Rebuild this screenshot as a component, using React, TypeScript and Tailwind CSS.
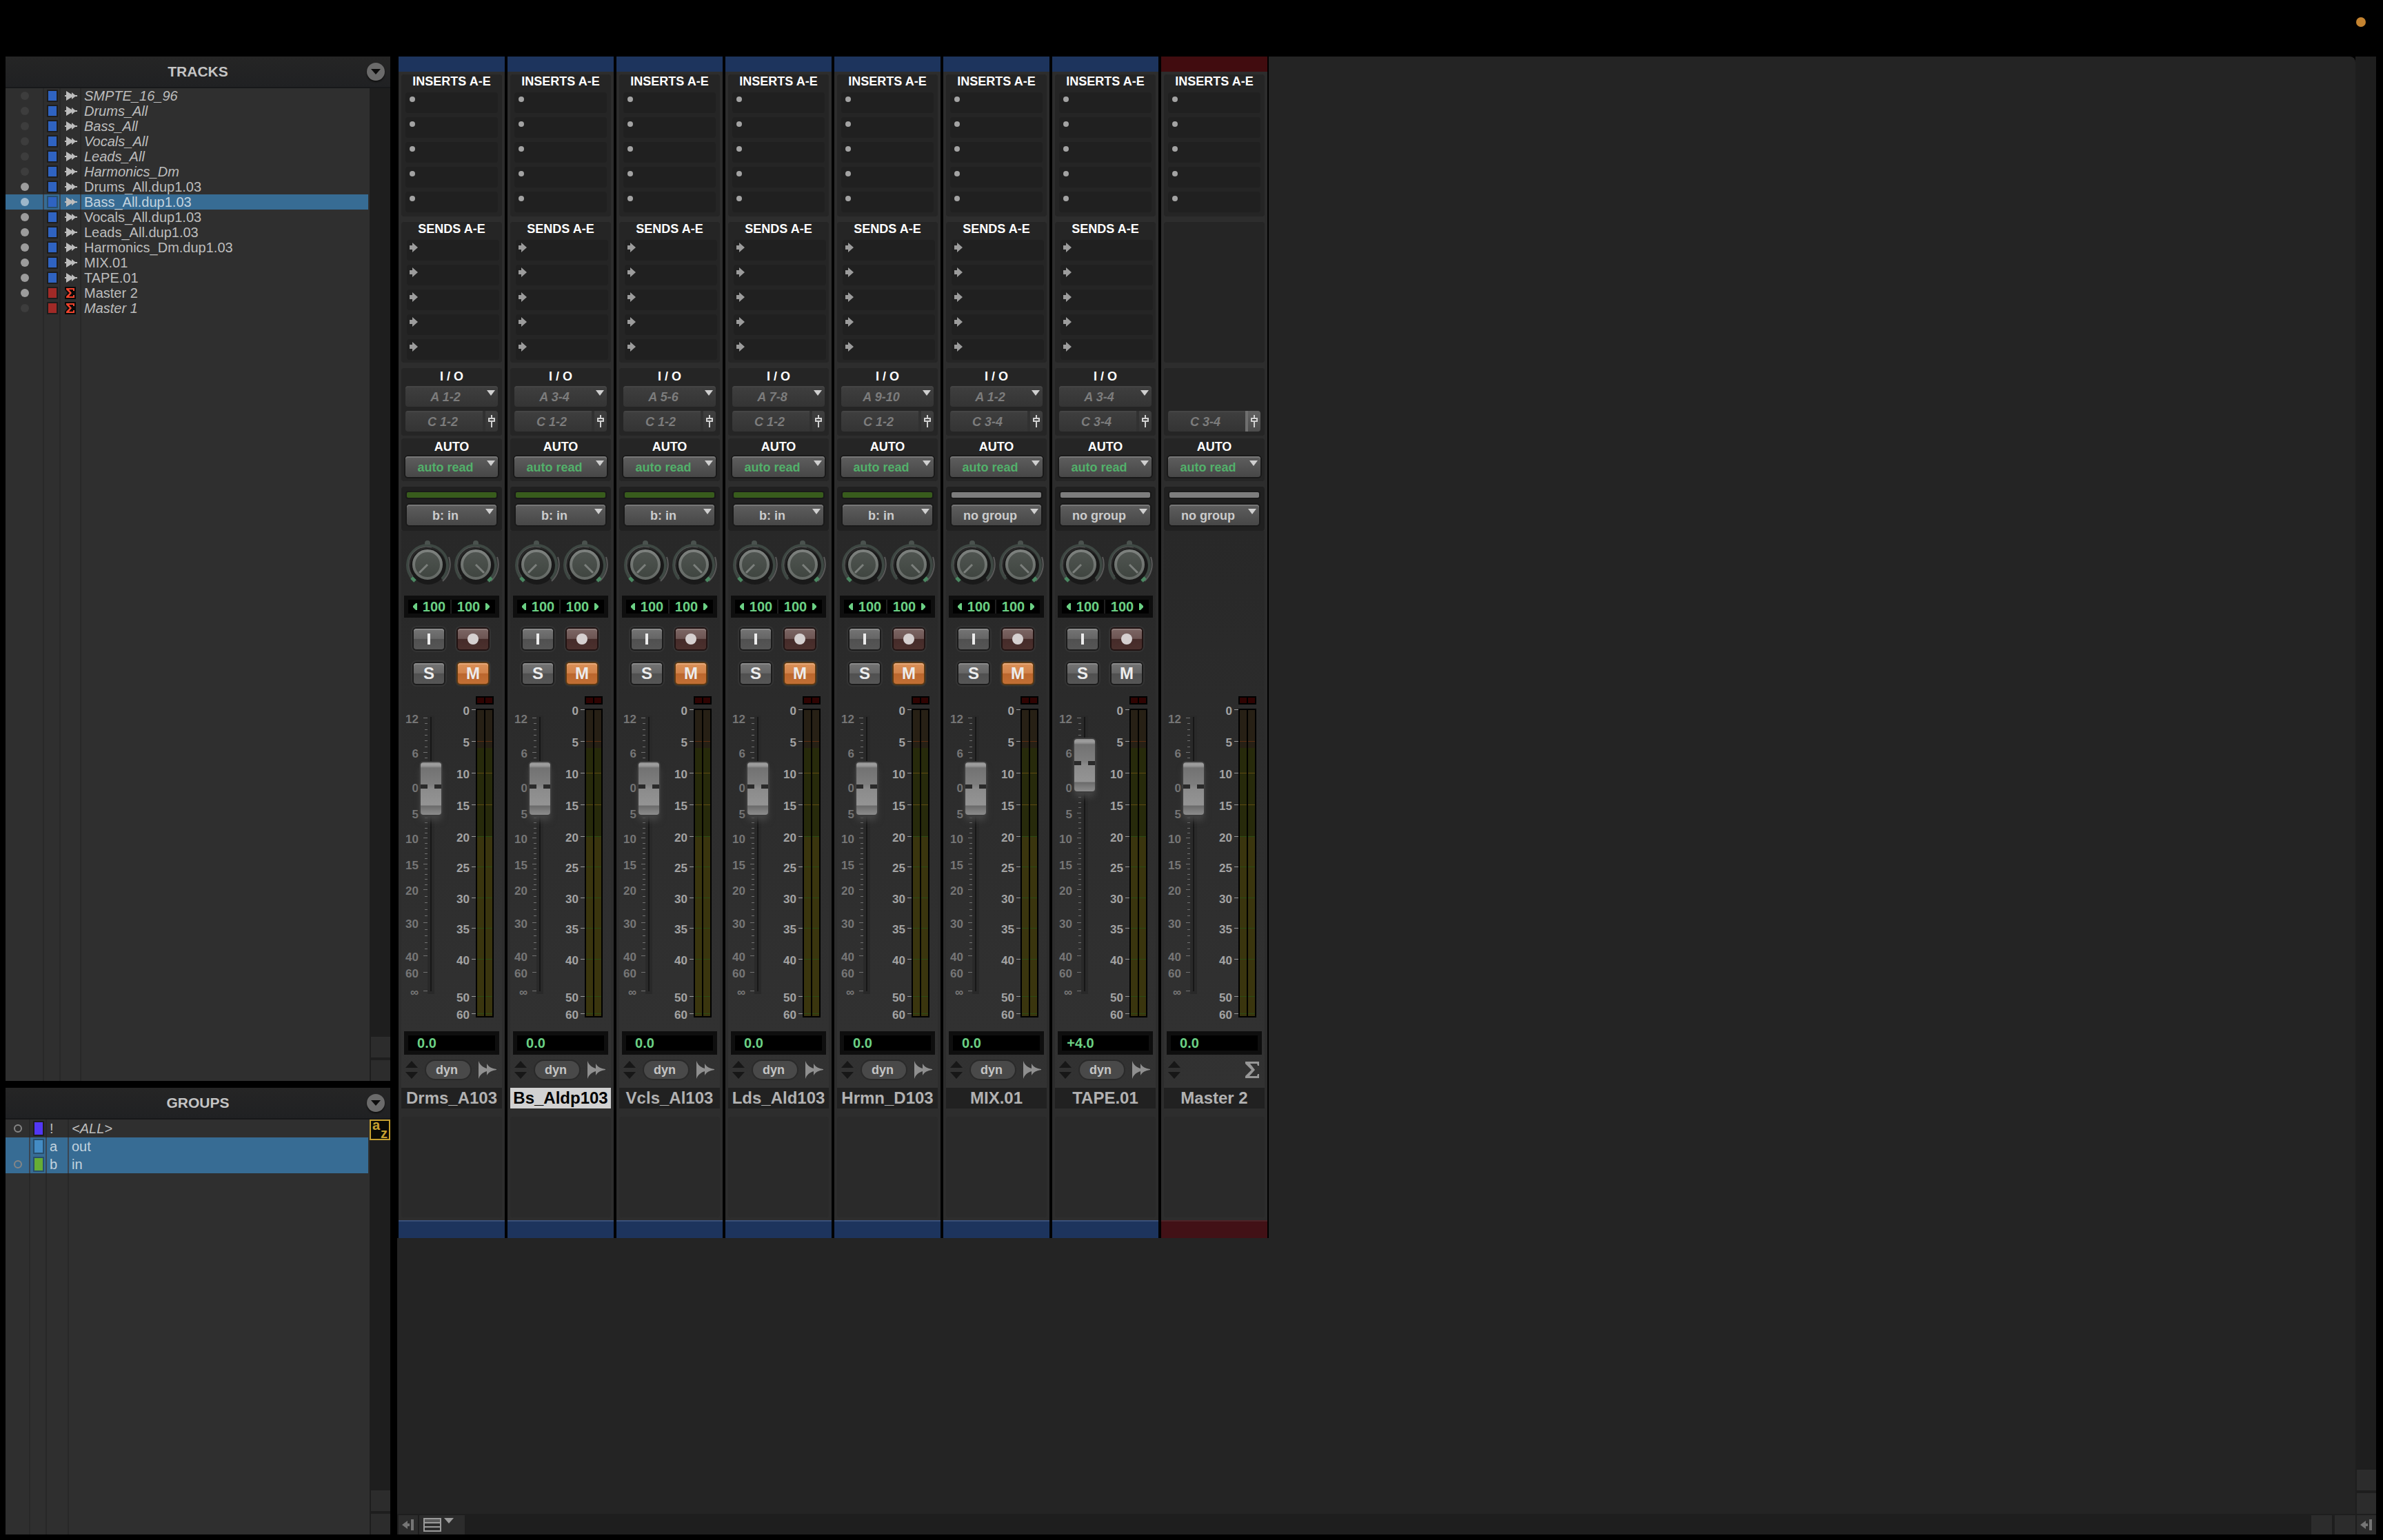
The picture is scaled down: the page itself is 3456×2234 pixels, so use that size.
import React from 'react';
import clsx from 'clsx';

type TrackKind = 'audio' | 'master';

interface TrackRow {
  name: string;
  kind: TrackKind;
  visible: boolean;
  selected?: boolean;
}

interface Strip {
  name: string;
  kind: TrackKind;
  input?: string;
  output: string;
  group: string;
  muted?: boolean;
  selected?: boolean;
  volume: string;
  fader: number;
}

const TRACKS: TrackRow[] = [
  { name: 'SMPTE_16_96', kind: 'audio', visible: false },
  { name: 'Drums_All', kind: 'audio', visible: false },
  { name: 'Bass_All', kind: 'audio', visible: false },
  { name: 'Vocals_All', kind: 'audio', visible: false },
  { name: 'Leads_All', kind: 'audio', visible: false },
  { name: 'Harmonics_Dm', kind: 'audio', visible: false },
  { name: 'Drums_All.dup1.03', kind: 'audio', visible: true },
  { name: 'Bass_All.dup1.03', kind: 'audio', visible: true, selected: true },
  { name: 'Vocals_All.dup1.03', kind: 'audio', visible: true },
  { name: 'Leads_All.dup1.03', kind: 'audio', visible: true },
  { name: 'Harmonics_Dm.dup1.03', kind: 'audio', visible: true },
  { name: 'MIX.01', kind: 'audio', visible: true },
  { name: 'TAPE.01', kind: 'audio', visible: true },
  { name: 'Master 2', kind: 'master', visible: true },
  { name: 'Master 1', kind: 'master', visible: false },
];

const GROUPS = [
  { id: '!', name: '<ALL>', color: 'bg-[#5237f5]', ring: true, selected: false },
  { id: 'a', name: 'out', color: 'bg-[#448cc4]', ring: false, selected: true },
  { id: 'b', name: 'in', color: 'bg-[#66ad35]', ring: true, selected: true },
];

const STRIPS: Strip[] = [
  { name: 'Drms_A103', kind: 'audio', input: 'A 1-2', output: 'C 1-2', group: 'b: in', muted: true, volume: '0.0', fader: 294 },
  { name: 'Bs_Aldp103', kind: 'audio', input: 'A 3-4', output: 'C 1-2', group: 'b: in', muted: true, selected: true, volume: '0.0', fader: 294 },
  { name: 'Vcls_Al103', kind: 'audio', input: 'A 5-6', output: 'C 1-2', group: 'b: in', muted: true, volume: '0.0', fader: 294 },
  { name: 'Lds_Ald103', kind: 'audio', input: 'A 7-8', output: 'C 1-2', group: 'b: in', muted: true, volume: '0.0', fader: 294 },
  { name: 'Hrmn_D103', kind: 'audio', input: 'A 9-10', output: 'C 1-2', group: 'b: in', muted: true, volume: '0.0', fader: 294 },
  { name: 'MIX.01', kind: 'audio', input: 'A 1-2', output: 'C 3-4', group: 'no group', muted: true, volume: '0.0', fader: 294 },
  { name: 'TAPE.01', kind: 'audio', input: 'A 3-4', output: 'C 3-4', group: 'no group', volume: '+4.0', fader: 328 },
  { name: 'Master 2', kind: 'master', output: 'C 3-4', group: 'no group', volume: '0.0', fader: 294 },
];

// label + y position inside the fader area
const FADER_SCALE: [string, number][] = [
  ['12', 39], ['6', 89], ['0', 139], ['5', 177], ['10', 213], ['15', 251],
  ['20', 288], ['30', 336], ['40', 384], ['60', 408], ['∞', 435],
];
const METER_SCALE: [string, number][] = [
  ['0', 27], ['5', 73], ['10', 119], ['15', 165], ['20', 211], ['25', 255],
  ['30', 300], ['35', 344], ['40', 389], ['50', 443], ['60', 468],
];
// number of minor ticks between each pair of fader marks
const MINOR = [5, 5, 4, 4, 4, 4, 4, 4, 0, 0];

const meterLine = (label: string) => {
  if (label === '0') return 'none';
  if (label === '5') return '#5c2e12';
  if (label === '10' || label === '15') return '#5e4a12';
  return '#2b4c14';
};

const FastIcon = () => (
  <svg width="18" height="14" viewBox="0 0 18 14" fill="#bdbdbd">
    <path d="M0 6h2V0l8 5V2l5 4h3v2h-3l-5 4V9l-8 5V8H0z" />
  </svg>
);

const SigmaIcon = () => (
  <svg width="16" height="18" viewBox="0 0 16 18">
    <path d="M0 0h16v18H0v-4l4-5-4-5z" fill="#0a0a0a" />
    <path d="M2 2h12v4h-2V4H6l4 5-4 5h6v-2h2v4H2v-2l5-5-5-5z" fill="#f0432c" />
  </svg>
);

const WaveIcon = () => (
  <svg width="26" height="26" viewBox="0 0 26 26" fill="#8f8f8f">
    <path d="M0 0c2 6 6 9 12 11V4c3 5 7 7 14 8v1c-7 1-11 3-14 8v-6C6 17 2 20 0 26z" />
  </svg>
);

const BigSigmaIcon = () => (
  <svg width="20" height="24" viewBox="0 0 20 24" fill="#979797">
    <path d="M0 0h20v6h-2l-1-3H7l7 9-8 9h11l1-3h2v6H0v-3l9-9-9-9z" />
  </svg>
);

const EdgeArrow = () => (
  <svg width="18" height="16" viewBox="0 0 18 16" fill="#757575">
    <path d="M0 8l8-6v4h3v4H8v4zM13 0h4v16h-4z" />
  </svg>
);

const Caret = ({ className }: { className: string }) => (
  <svg className={className} width="12" height="8" viewBox="0 0 12 8" fill="#cfcfcf">
    <path d="M0 0h12L6 8z" />
  </svg>
);

const PanelHeader = ({ title }: { title: string }) => (
  <header className="flex h-[46px] shrink-0 items-center border-b-2 border-[#17181a] bg-gradient-to-b from-[#252525] to-[#202123]">
    <h2 className="flex-1 pl-[34px] text-center text-[21px] font-bold text-[#c4c4c4]">{title}</h2>
    <button aria-label={`${title} menu`} className="mr-2 flex h-[26px] w-[26px] items-center justify-center rounded-full bg-[#6b6b6b] shadow-[0_2px_2px_#101010]">
      <svg width="14" height="8" viewBox="0 0 14 8"><path d="M0 0h14L7 8z" fill="#0c0c0c" /></svg>
    </button>
  </header>
);

const ListScrollbar = ({ children }: { children?: React.ReactNode }) => (
  <div className="flex w-[30px] shrink-0 flex-col bg-[#1e1e1e]">
    {children}
    <div className="mt-auto ml-0.5 flex flex-col gap-1">
      <div className="h-[30px] bg-[#2c2c2c]" />
      <div className="h-[30px] bg-[#2c2c2c]" />
    </div>
  </div>
);

const Swatch = ({ color, selected, tall }: { color: string; selected?: boolean; tall?: boolean }) => (
  <span
    className={clsx('block w-4 border-2', color, tall ? 'h-[22px]' : 'h-[18px]', selected ? 'border-[#284f6d]' : 'border-[#1d1d1d]')}
  />
);

const TracksPanel = () => (
  <section className="flex min-h-0 flex-1 flex-col">
    <PanelHeader title="TRACKS" />
    <div className="flex min-h-0 flex-1">
      <ul className="flex flex-1 flex-col bg-[#2f2f2f] pr-0.5">
        {TRACKS.map((t) => {
          const rule = t.selected ? 'border-r-2 border-[#3a4552]' : 'border-r-2 border-[#282828]';
          return (
            <li
              key={t.name}
              className={clsx('grid h-[22px] shrink-0 grid-cols-[56px_24px_30px_1fr]', t.selected ? 'bg-[#376c94]' : '')}
            >
              <span className={clsx('flex items-center justify-center pl-0.5', rule)}>
                <span className={clsx('h-3 w-3 rounded-full', t.selected ? 'bg-[#9db7cb]' : t.visible ? 'bg-[#9c9c9c]' : 'bg-[#3d3d3d]')} />
              </span>
              <span className={clsx('flex items-center pl-1', rule)}>
                <Swatch color={t.kind === 'audio' ? 'bg-[#2f63c1]' : 'bg-[#a12a27]'} selected={t.selected} />
              </span>
              <span className={clsx('flex items-center pl-1.5', rule)}>{t.kind === 'audio' ? <FastIcon /> : <SigmaIcon />}</span>
              <button
                className={clsx('pl-1 text-left text-[20px] leading-[22px]', !t.visible && 'italic', t.selected ? 'text-[#c3d3df]' : 'text-[#bdbdbd]')}
              >
                {t.name}
              </button>
            </li>
          );
        })}
        <li aria-hidden="true" className="grid flex-1 grid-cols-[56px_24px_30px_1fr]">
          <span className="border-r-2 border-[#282828]" />
          <span className="border-r-2 border-[#282828]" />
          <span className="border-r-2 border-[#282828]" />
        </li>
      </ul>
      <ListScrollbar />
    </div>
  </section>
);

const GroupsPanel = () => (
  <section className="flex h-[648px] shrink-0 flex-col">
    <PanelHeader title="GROUPS" />
    <div className="flex min-h-0 flex-1">
      <ul className="flex flex-1 flex-col bg-[#2f2f2f] pr-0.5">
        {GROUPS.map((g) => {
          const rule = g.selected ? 'border-r-2 border-[#3a4552]' : 'border-r-2 border-[#282828]';
          return (
            <li
              key={g.id}
              className={clsx(
                'grid h-[26px] shrink-0 grid-cols-[36px_24px_32px_1fr] text-[20px] leading-[26px]',
                g.selected ? 'bg-[#376c94] text-[#c3d3df]' : 'text-[#bdbdbd]'
              )}
            >
              <span className={clsx('flex items-center justify-center pl-0.5', rule)}>
                {g.ring && <span className="h-3 w-3 rounded-full border-2 border-[#868686]" />}
              </span>
              <span className={clsx('flex items-center pl-1', rule)}>
                <Swatch color={g.color} selected={g.selected} tall />
              </span>
              <span className={clsx('pl-1', rule)}>{g.id}</span>
              <button className={clsx('pl-1 text-left', !g.selected && 'italic')}>{g.name}</button>
            </li>
          );
        })}
        <li aria-hidden="true" className="grid flex-1 grid-cols-[36px_24px_32px_1fr]">
          <span className="border-r-2 border-[#282828]" />
          <span className="border-r-2 border-[#282828]" />
          <span className="border-r-2 border-[#282828]" />
        </li>
      </ul>
      <ListScrollbar>
        <button className="flex h-[30px] w-[30px] justify-between border-2 border-[#c6a030] bg-[#0b0a06] px-0.5 text-[20px] font-bold text-[#c6a030]">
          <span className="self-start leading-3">a</span>
          <span className="self-end leading-4">z</span>
        </button>
      </ListScrollbar>
    </div>
  </section>
);

const SectionTitle = ({ children, loose }: { children?: React.ReactNode; loose?: boolean }) => (
  <h3 className={clsx('h-[26px] text-center text-[18px] font-bold text-white', loose ? 'leading-6' : 'leading-5')}>{children}</h3>
);

const Slots = ({ label, sends }: { label: string; sends?: boolean }) => (
  <div className={clsx('flex flex-col gap-1.5', sends ? 'pr-1 pl-2' : 'px-1.5')}>
    {['a', 'b', 'c', 'd', 'e'].map((slot) => (
      <button
        key={slot}
        aria-label={`${label} ${slot}`}
        className={clsx('flex h-[30px] items-start rounded bg-[#202020]', sends ? 'pt-1 pl-1' : 'pt-1.5 pl-1.5')}
      >
        {sends ? (
          <svg width="12" height="14" viewBox="0 0 12 14" fill="#9c9c9c"><path d="M0 4h4V0l8 7-8 7v-4H0z" /></svg>
        ) : (
          <span className="h-2 w-2 rounded-full bg-[#a3a3a3]" />
        )}
      </button>
    ))}
  </div>
);

const DropDown = ({ label, value, tone }: { label: string; value: string; tone: 'dim' | 'auto' | 'group' }) => (
  <div className="relative">
    <select
      aria-label={label}
      defaultValue={value}
      className={clsx(
        'block h-[30px] w-full appearance-none rounded pt-0.5 pr-[18px] text-[18px] font-bold [text-align-last:center]',
        tone === 'dim' && 'bg-gradient-to-b from-[#3f3f3f] to-[#343434] text-[#7c7c7c] italic shadow-[inset_0_2px_0_#454545]',
        tone !== 'dim' && 'bg-gradient-to-b from-[#5e5e5e] to-[#474747] shadow-[inset_0_2px_0_#777777,0_0_0_2px_#191919]',
        tone === 'auto' && 'text-[#52b06a]',
        tone === 'group' && 'text-[#cbcbcb]'
      )}
    >
      <option>{value}</option>
    </select>
    <Caret className="pointer-events-none absolute top-1.5 right-1" />
  </div>
);

const OutputPath = ({ value, master }: { value: string; master?: boolean }) => (
  <div className="flex h-[30px] overflow-hidden rounded">
    <button className="flex-1 bg-gradient-to-b from-[#3f3f3f] to-[#343434] pt-0.5 pr-1 text-[18px] font-bold text-[#7c7c7c] italic shadow-[inset_0_2px_0_#454545]">
      {value}
    </button>
    <button
      aria-label="Output window"
      className={clsx(
        'flex w-[22px] items-center justify-center border-l-4 bg-gradient-to-b',
        master ? 'border-[#6f6f6f] from-[#626262] to-[#4c4c4c]' : 'border-[#313131] from-[#3f3f3f] to-[#343434]'
      )}
    >
      <svg width="10" height="18" viewBox="0 0 10 18">
        <path d="M4 0h2v18H4z" fill="#d0d0d0" />
        <path d="M1 5h8v4H1z" fill="#444" stroke="#d0d0d0" strokeWidth="2" />
      </svg>
    </button>
  </div>
);

const Knob = ({ side }: { side: 'left' | 'right' }) => {
  const dir = side === 'left' ? -1 : 1;
  return (
    <label className="block">
      <input type="range" min={-100} max={100} defaultValue={dir * 100} aria-label={`Pan ${side}`} className="sr-only" />
      <svg width="70" height="68" viewBox="-35 -37 70 68" fill="none">
        <defs>
          <linearGradient id={`knob-${side}`} x1="0" y1="0" x2="0" y2="1">
            <stop offset="0" stopColor="#505551" />
            <stop offset="1" stopColor="#3f4540" />
          </linearGradient>
          <linearGradient id={`rim-${side}`} x1="0" y1="0" x2="0" y2="1">
            <stop offset="0" stopColor="#7d817e" />
            <stop offset="1" stopColor="#646965" />
          </linearGradient>
        </defs>
        <circle cx="1" cy="3" r="26" fill="#151515" opacity="0.8" />
        <path d="M-21 21A29 29 0 1 1 21 21" stroke="#3e4843" strokeWidth="4" />
        <path d="M-21 17A26 26 0 0 1 6 -25" stroke="#565656" strokeWidth="1" />
        <path d="M31 -11A33 33 0 0 1 22 24" stroke="#595959" strokeWidth="2" />
        <path d="M-4 -29v-2a4 4 0 0 1 8 0v2z" fill="#4a524e" />
        <path d={side === 'left' ? 'M-23 19l5 5' : 'M23 19l-5 5'} stroke="#4b8862" strokeWidth="5" />
        <circle r="20" fill={`url(#knob-${side})`} stroke={`url(#rim-${side})`} strokeWidth="4" />
        <path d={side === 'left' ? 'M0 0L-12 12' : 'M0 0L12 12'} stroke="#7b7f7c" strokeWidth="3" />
      </svg>
    </label>
  );
};

const GREY_BTN =
  'bg-[linear-gradient(#747474,#666666_48%,#505050_50%,#565656)] shadow-[inset_0_2px_0_#8a8a8a,0_0_0_2px_#1c1c1c,0_0_0_4px_#333333]';
const REC_BTN =
  'bg-[linear-gradient(#7c6664,#6d5553_48%,#452b29_50%,#4b302d)] shadow-[inset_0_2px_0_#8d7a78,0_0_0_2px_#211312,0_0_0_4px_#333333]';
const MUTE_BTN =
  'bg-[linear-gradient(#db9158,#d1834b_48%,#bb662d_50%,#c26f34)] shadow-[inset_0_2px_0_#e6a878,0_0_0_2px_#5c3a14,0_0_0_4px_#333333]';

const ChannelButtons = ({ muted }: { muted?: boolean }) => (
  <div className="mt-4 grid grid-cols-[44px_44px] justify-center gap-x-5 gap-y-5 pr-0.5 text-[24px] leading-[30px] font-bold text-[#ececec]">
    <button aria-label="Input monitor" className={clsx('flex h-[30px] items-center justify-center rounded-sm', GREY_BTN)}>
      <span className="h-4 w-1 bg-[#ececec]" />
    </button>
    <button aria-label="Record enable" className={clsx('flex h-[30px] items-center justify-center rounded-sm', REC_BTN)}>
      <span className="h-4 w-4 rounded-full bg-[#d6d0d0]" />
    </button>
    <button aria-label="Solo" className={clsx('h-[30px] rounded-sm', GREY_BTN)}>S</button>
    <button aria-label="Mute" className={clsx('h-[30px] rounded-sm', muted ? MUTE_BTN : GREY_BTN)}>M</button>
  </div>
);

const FaderAndMeter = ({ value, name }: { value: number; name: string }) => (
  <div className="relative h-[474px]">
    <svg
      width="146"
      height="474"
      viewBox="0 0 146 474"
      className="block overflow-visible font-['Liberation_Sans_Narrow','Liberation_Sans',sans-serif] text-[17px] font-bold"
      shapeRendering="crispEdges"
    >
      <rect x="38" y="36" width="10" height="404" fill="#292929" />
      <rect x="42" y="38" width="2" height="398" fill="#171717" />
      {FADER_SCALE.map(([label, y], i) => (
        <g key={label}>
          <text x="25" y={y + 8} textAnchor="end" fill="#767676">{label}</text>
          <rect x="32" y={y} width="6" height="1" fill="#727272" />
          {i < MINOR.length &&
            Array.from({ length: MINOR[i] }, (_, n) => {
              const next = FADER_SCALE[i + 1][1];
              return <rect key={n} x="34" y={Math.round(y + ((next - y) * (n + 1)) / (MINOR[i] + 1))} width="4" height="1" fill="#727272" />;
            })}
        </g>
      ))}
      <rect x="108" y="8" width="26" height="12" fill="#000" />
      <rect x="110" y="10" width="10" height="8" fill="#2f0302" />
      <rect x="122" y="10" width="10" height="8" fill="#2f0302" />
      <rect x="108" y="26" width="26" height="448" fill="#000" />
      {[110, 122].map((x) => (
        <g key={x}>
          <rect x={x} y="28" width="10" height="55" fill="#272015" />
          <rect x={x} y="83" width="10" height="128" fill="#272a0b" />
          <rect x={x} y="211" width="10" height="261" fill="#3a350e" />
          {METER_SCALE.map(([label, y]) => (
            <rect key={label} x={x} y={y} width="10" height="1" fill={meterLine(label)} />
          ))}
        </g>
      ))}
      {METER_SCALE.map(([label, y]) => (
        <g key={label}>
          <text x="99" y={y + 8} textAnchor="end" fill="#a3a3a3">{label}</text>
          <rect x="102" y={y} width="6" height="1" fill="#9a9a9a" />
        </g>
      ))}
    </svg>
    <input
      type="range"
      min={0}
      max={398}
      defaultValue={value}
      aria-label={`${name} volume`}
      className="absolute top-0 left-7 m-0 h-[474px] w-[30px] appearance-none bg-transparent [direction:rtl] [writing-mode:vertical-lr] [&::-webkit-slider-thumb]:h-[76px] [&::-webkit-slider-thumb]:w-[30px] [&::-webkit-slider-thumb]:appearance-none [&::-webkit-slider-thumb]:rounded [&::-webkit-slider-thumb]:bg-[linear-gradient(90deg,#2a2a2a_10px,transparent_10px,transparent_20px,#2a2a2a_20px),linear-gradient(#8c8c8c,#a0a0a0_3px,#8e8e8e_6px,#727272_8px,#7e7e7e_32px,#8b8b8b_38px,#949494_62px,#6a6a6a_63px,#7e7e7e_70px,#8c8c8c)] [&::-webkit-slider-thumb]:bg-[length:100%_6px,100%_100%] [&::-webkit-slider-thumb]:bg-[position:0_32px,0_0] [&::-webkit-slider-thumb]:bg-no-repeat [&::-webkit-slider-thumb]:shadow-[0_0_0_2px_#3c3c3c,0_8px_10px_#444444]"
    />
  </div>
);

const Display = ({ children, className }: { children: React.ReactNode; className: string }) => (
  <div className={clsx('mx-1 border-[6px] border-[#0e0e0e] bg-black text-[20px] font-bold text-[#6bd084]', className)}>{children}</div>
);

const ChannelStrip = ({ strip }: { strip: Strip }) => {
  const master = strip.kind === 'master';
  return (
    <article className="flex w-[154px] shrink-0 flex-col bg-[#2d2d2d]">
      <div className={clsx('h-[22px]', master ? 'bg-[#410c0f]' : 'bg-[#1d345d]')} />
      <div className="flex flex-col p-1">
        <section className="rounded bg-[#252525] pb-1.5">
          <SectionTitle>INSERTS A-E</SectionTitle>
          <Slots label="Insert" />
        </section>

        <section className="mt-2 h-[204px] rounded bg-[#252525] pb-1">
          {!master && (
            <>
              <SectionTitle>SENDS A-E</SectionTitle>
              <Slots label="Send" sends />
            </>
          )}
        </section>

        <section className="mt-2 flex h-[98px] flex-col rounded bg-[#252525] px-1.5 pb-1.5">
          {!master && <SectionTitle loose>I / O</SectionTitle>}
          {strip.input && <DropDown label="Input" value={strip.input} tone="dim" />}
          <div className="mt-auto">
            <OutputPath value={strip.output} master={master} />
          </div>
        </section>

        <section className="mt-1 rounded bg-[#252525] px-1.5 pb-1.5">
          <SectionTitle loose>AUTO</SectionTitle>
          <DropDown label="Automation mode" value="auto read" tone="auto" />
        </section>

        <section className="mt-2 rounded bg-[#202020] p-2">
          <div className={clsx('mb-2.5 h-2 rounded-xs shadow-[0_0_0_2px_#191919]', strip.group === 'b: in' ? 'bg-[#385c1c]' : 'bg-[#7d7d7d]')} />
          <DropDown label="Group" value={strip.group} tone="group" />
        </section>

        <div className="bg-gradient-to-b from-[#282828] to-[#323232] pb-2">
          <section className="h-[232px] pt-3">
            {!master && (
              <>
                <div className="flex justify-center">
                  <Knob side="left" />
                  <Knob side="right" />
                </div>
                <Display className="mt-3.5 grid h-8 grid-cols-2 leading-5">
                  <output className="flex items-center justify-center gap-2 border-r-2 border-[#1f1f1f]">
                    <svg width="6" height="10" viewBox="0 0 6 10" fill="#6bd084"><path d="M0 4l4-4h2v10H4L0 6z" /></svg>
                    100
                  </output>
                  <output className="flex items-center justify-center gap-2">
                    100
                    <svg width="6" height="10" viewBox="0 0 6 10" fill="#6bd084"><path d="M6 4L2 0H0v10h2l4-4z" /></svg>
                  </output>
                </Display>
                <ChannelButtons muted={strip.muted} />
              </>
            )}
          </section>

          <FaderAndMeter value={strip.fader} name={strip.name} />

          <Display className="mt-5 h-[34px] leading-[22px]">
            <output className="block w-[54px] text-center">{strip.volume}</output>
          </Display>

          <div className="mt-1 flex h-9 items-center justify-between pr-2 pl-1.5">
            <svg width="18" height="26" viewBox="0 0 18 26" fill="#171717"><path d="M9 0l9 10H0zM0 16h18l-9 10z" /></svg>
            {master ? (
              <BigSigmaIcon />
            ) : (
              <>
                <button className="h-[26px] w-16 rounded-full bg-[#494949] pr-1 text-[18px] leading-[26px] font-bold text-[#c4c4c4] shadow-[0_0_0_2px_#2a2a2a]">dyn</button>
                <WaveIcon />
              </>
            )}
          </div>
        </div>

        <button
          className={clsx(
            'h-[30px] text-center text-[24px] leading-[30px] font-bold',
            strip.selected ? 'bg-[#d2d2d2] text-black' : 'bg-[#212121] text-[#b2b2b2]'
          )}
        >
          {strip.name}
        </button>
        <textarea aria-label={`${strip.name} comments`} className="mt-3 block h-[146px] resize-none rounded-sm bg-[#2a2a2a]" />
      </div>
      <div className={clsx('h-[26px] border-t-2', master ? 'border-[#4d2427] bg-[#421116]' : 'border-[#3a5078] bg-[#1d345d]')} />
    </article>
  );
};

const App: React.FC = () => {
  return (
    <div className="flex h-screen flex-col bg-black font-['Liberation_Sans',Arial,sans-serif]">
      <div className="flex h-[82px] shrink-0 items-start justify-end pt-[25px] pr-[25px]">
        <span className="h-3.5 w-3.5 rounded-full bg-[#c48330]" />
      </div>

      <div className="flex min-h-0 flex-1 gap-2.5 pr-2.5 pb-2 pl-2">
        <aside className="flex w-[558px] shrink-0 flex-col gap-2.5">
          <TracksPanel />
          <GroupsPanel />
        </aside>

        <main className="flex min-w-0 flex-1">
          <div className="flex min-w-0 flex-1 flex-col">
            <div className="min-h-0 flex-1 overflow-hidden rounded-tr-lg bg-[#242424]">
              <div className="flex w-fit gap-1 bg-black pr-0.5 pl-0.5">
                {STRIPS.map((s) => (
                  <ChannelStrip key={s.name} strip={s} />
                ))}
              </div>
            </div>
            <footer className="flex h-[30px] shrink-0 gap-0.5 bg-[#1e1e1e] pt-0.5 pl-0.5">
              <button aria-label="Scroll to start" className="flex w-7 items-center justify-center bg-[#2c2c2c]">
                <EdgeArrow />
              </button>
              <button aria-label="Mixer view" className="flex w-[66px] gap-1 bg-[#2c2c2c] pt-1 pl-1.5">
                <svg width="26" height="20" viewBox="0 0 26 20">
                  <path d="M1 1h24v18H1zM1 7h24M1 13h24" fill="none" stroke="#9b9b9b" strokeWidth="2" />
                  <path d="M2 2h22v4H2z" fill="#5a5a5a" />
                </svg>
                <svg width="14" height="8" viewBox="0 0 14 8" fill="#9b9b9b"><path d="M0 0h14L7 8z" /></svg>
              </button>
              <div className="ml-auto flex gap-1">
                <div className="w-[30px] bg-[#2c2c2c]" />
                <div className="w-[30px] bg-[#2c2c2c]" />
              </div>
            </footer>
          </div>
          <div className="flex w-[30px] shrink-0 flex-col justify-end gap-1 bg-[#1e1e1e] pl-0.5">
            <div className="h-[30px] bg-[#2c2c2c]" />
            <div className="h-[30px] bg-[#2c2c2c]" />
            <button aria-label="Toggle right edge" className="-mt-0.5 flex h-7 items-center justify-center bg-[#2c2c2c]">
              <EdgeArrow />
            </button>
          </div>
        </main>
      </div>
    </div>
  );
};

export default App;
